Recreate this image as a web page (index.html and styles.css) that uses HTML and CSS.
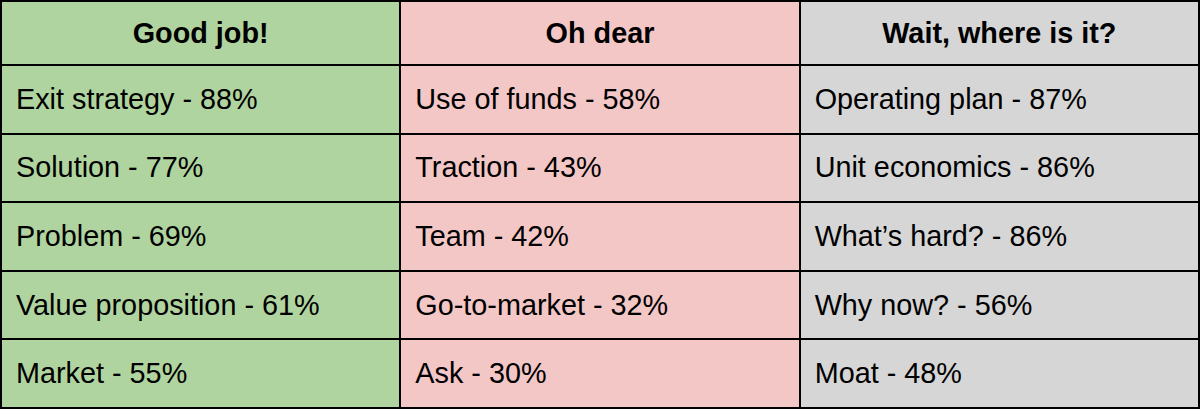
FILE: index.html
```html
<!DOCTYPE html>
<html>
<head>
<meta charset="utf-8">
<link rel="stylesheet" href="styles.css">
</head>
<body>
<div class="grid">
  <div class="cell head good">Good job!</div>
  <div class="cell head bad">Oh dear</div>
  <div class="cell head missing">Wait, where is it?</div>

  <div class="cell good">Exit strategy - 88%</div>
  <div class="cell bad">Use of funds - 58%</div>
  <div class="cell missing">Operating plan - 87%</div>

  <div class="cell good">Solution - 77%</div>
  <div class="cell bad">Traction - 43%</div>
  <div class="cell missing">Unit economics - 86%</div>

  <div class="cell good">Problem - 69%</div>
  <div class="cell bad">Team - 42%</div>
  <div class="cell missing">What’s hard? - 86%</div>

  <div class="cell good">Value proposition - 61%</div>
  <div class="cell bad">Go-to-market - 32%</div>
  <div class="cell missing">Why now? - 56%</div>

  <div class="cell good">Market - 55%</div>
  <div class="cell bad">Ask - 30%</div>
  <div class="cell missing">Moat - 48%</div>
</div>
</body>
</html>
```
FILE: styles.css
```css
html, body {
  margin: 0;
  padding: 0;
  background: #ffffff;
}

.grid {
  box-sizing: border-box;
  width: 1200px;
  height: 409px;
  display: grid;
  grid-template-columns: 1fr 1fr 1fr;
  grid-template-rows: 62px repeat(5, 1fr);
  gap: 2px;
  padding: 2px;
  background: #000000;
  font-family: "Liberation Sans", Arial, sans-serif;
  font-size: 28.8px;
  color: #000000;
}

.cell {
  display: flex;
  align-items: center;
  padding: 0 14px;
  white-space: nowrap;
}

.head {
  justify-content: center;
  font-weight: bold;
}

.good {
  background: #b0d49f;
}

.bad {
  background: #f4c7c7;
}

.missing {
  background: #d6d6d6;
}
```
